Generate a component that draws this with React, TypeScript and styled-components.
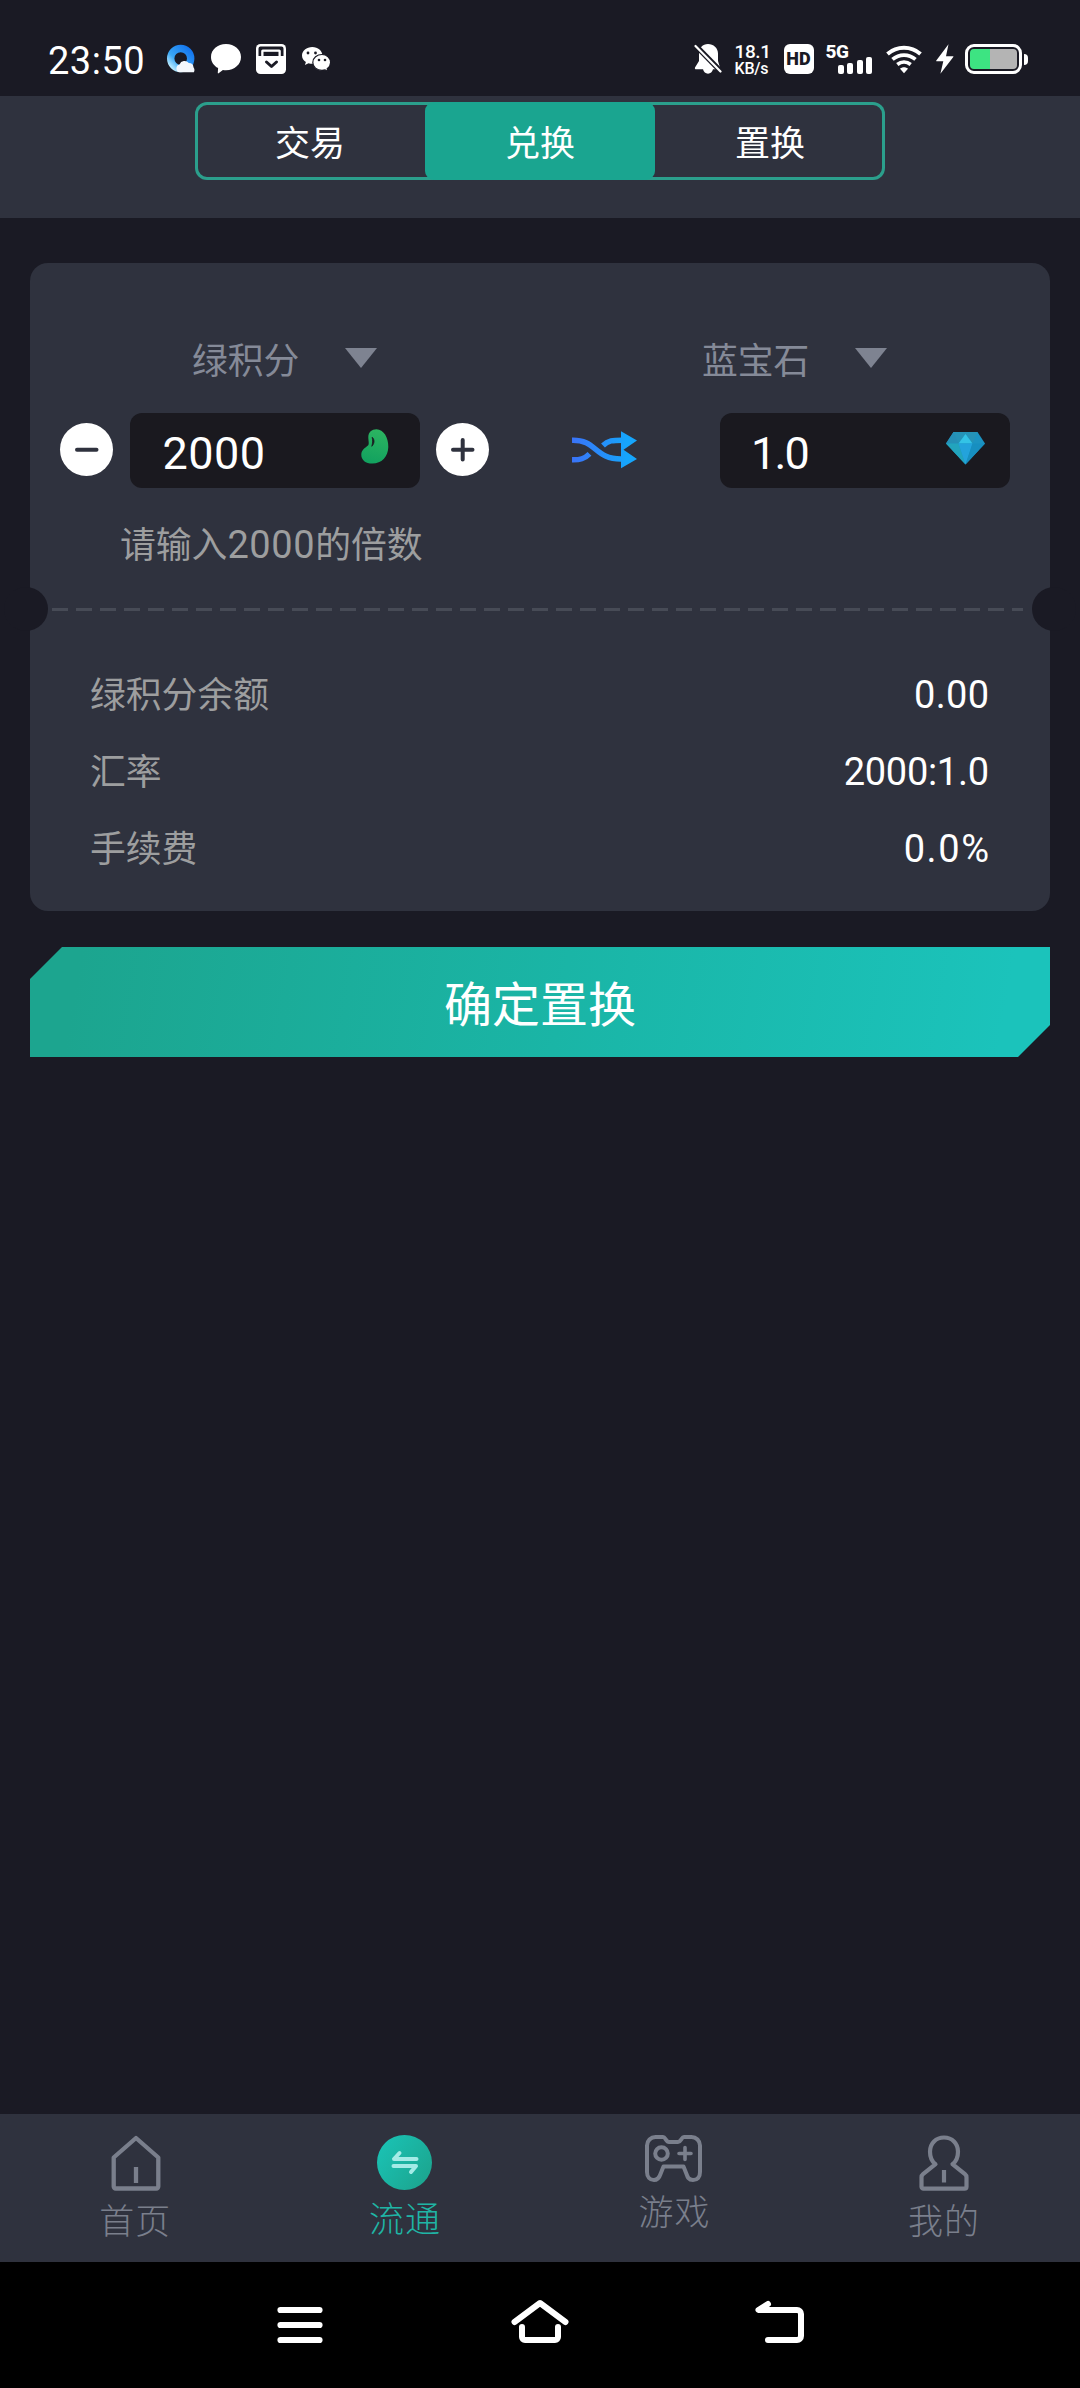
import React from "react";
import styled, { createGlobalStyle } from "styled-components";

const c = {
  page: "#1a1a24",
  panel: "#2f323e",
  field: "#1a191f",
  teal: "#1aa590",
  muted: "#858a98",
  grey: "#9d9e9f",
};

const GlobalStyle = createGlobalStyle`
  * { box-sizing: border-box; }
  body {
    margin: 0;
    background: ${c.page};
    font-family: Roboto, "Noto Sans CJK SC", sans-serif;
    font-weight: 400;
    color: #fff;
  }
  svg { display: block; flex: none; }
`;

const Screen = styled.div`
  width: 1080px;
  height: 2388px;
  display: flex;
  flex-direction: column;
  background: ${c.page};
  overflow: hidden;
`;

/* ---------- status bar ---------- */

const StatusBar = styled.div`
  height: 96px;
  padding: 44px 52px 0 48px;
  display: flex;
  justify-content: space-between;
`;

const StatusGroup = styled.div`
  display: flex;
  align-items: flex-start;
`;

const Clock = styled.div`
  width: 119px;
  font-size: 38px;
  line-height: 35px;
  letter-spacing: 0.5px;
  white-space: nowrap;
`;

const Slot = styled.div<{ $w: number; $gap?: number }>`
  width: ${(p) => p.$w}px;
  margin-right: ${(p) => p.$gap ?? 0}px;
  flex: none;
`;

const NetSpeed = styled(Slot)`
  display: flex;
  flex-direction: column;
  white-space: nowrap;
  font-weight: 500;
`;

const SpeedValue = styled.span`
  font-size: 19px;
  line-height: 15px;
  letter-spacing: -0.4px;
`;

const SpeedUnit = styled.span`
  margin-top: 2px;
  font-size: 16px;
  line-height: 15px;
  letter-spacing: -0.2px;
`;

const HdBadge = styled(Slot)`
  height: 30px;
  border-radius: 6px;
  background: #fff;
  color: ${c.page};
  font-size: 18px;
  font-weight: 900;
  line-height: 30px;
  text-align: center;
`;

const Signal = styled(Slot)`
  height: 30px;
  display: flex;
  flex-direction: column;
`;

const SignalLabel = styled.span`
  height: 14px;
  font-size: 19px;
  font-weight: 800;
  line-height: 15px;
  letter-spacing: -0.5px;
`;

const SignalBars = styled.div`
  margin-top: -1px;
  height: 17px;
  padding-left: 12px;
  display: flex;
  align-items: flex-end;
  gap: 3.6px;
`;

const SignalBar = styled.span<{ $h: number }>`
  width: 6px;
  height: ${(p) => p.$h}px;
  border-radius: 2px;
  background: #fff;
`;

const Battery = styled.div`
  display: flex;
  align-items: center;
  gap: 2.5px;
`;

const BatteryBody = styled.div`
  width: 57px;
  height: 30px;
  padding: 2px;
  border: 3px solid #fff;
  border-radius: 9px;
`;

const BatteryCharge = styled.div`
  height: 100%;
  border-radius: 4px;
  background: linear-gradient(90deg, #3de482 42%, #b4b4b4 42%);
`;

const BatteryTip = styled.div`
  width: 4px;
  height: 11px;
  border-radius: 0 5px 5px 0;
  background: #fff;
`;

/* ---------- header tabs ---------- */

const Header = styled.header`
  height: 122px;
  padding-top: 6px;
  background: ${c.panel};
  display: flex;
  justify-content: center;
  align-items: flex-start;
`;

const Segments = styled.div`
  width: 690px;
  height: 78px;
  display: grid;
  grid-template-columns: repeat(3, 1fr);
  border-radius: 12px;
  box-shadow: inset 0 0 0 3px #2b9f8c;
`;

const Segment = styled.button<{ $active?: boolean }>`
  height: 78px;
  margin: 0;
  padding: 4px 0 0;
  border: 0;
  border-radius: 9px;
  background: ${(p) => (p.$active ? c.teal : "transparent")};
  color: #fff;
  font: inherit;
  font-size: 35px;
  line-height: 77px;
  display: flex;
  align-items: flex-start;
  justify-content: center;
`;

/* ---------- exchange card ---------- */

const Card = styled.section`
  height: 648px;
  margin: 45px 30px 0;
  padding-top: 79px;
  border-radius: 18px;
  background: ${c.panel};
`;

const Selects = styled.div`
  padding-left: 162px;
  display: flex;
  gap: 325px;
`;

const Select = styled.div`
  display: flex;
  justify-content: space-between;
  width: 185px;
  color: ${c.muted};
  font-size: 35.8px;
  line-height: 40px;
`;

const Caret = styled.span`
  width: 32px;
  height: 20px;
  margin-top: 6px;
  background: #7e8391;
  clip-path: polygon(0 0, 100% 0, 50% 100%);
`;

const Amounts = styled.div`
  height: 75px;
  margin-top: 31px;
  padding: 0 40px 0 30px;
  display: flex;
  align-items: flex-start;
  justify-content: space-between;
`;

const Stepper = styled.div`
  display: flex;
  align-items: flex-start;
  gap: 16.5px;
`;

const RoundButton = styled.button`
  width: 53px;
  height: 53px;
  margin: 10px 0 0;
  padding: 0;
  border: 0;
  border-radius: 50%;
  background: #fff;
`;

const Field = styled.div<{ $left: number; $right: number }>`
  width: 290px;
  height: 75px;
  padding: 0 ${(p) => p.$right}px 0 ${(p) => p.$left}px;
  display: flex;
  justify-content: space-between;
  align-items: flex-start;
  border-radius: 12px;
  background: ${c.field};
`;

const Amount = styled.span<{ $track: number }>`
  font-size: 45px;
  line-height: 81px;
  letter-spacing: ${(p) => p.$track}px;
`;

const IconBox = styled.div<{ $top: number }>`
  margin-top: ${(p) => p.$top}px;
`;

const Hint = styled.p`
  margin: 37px 0 0;
  padding-left: 90px;
  color: ${c.grey};
  font-size: 35.8px;
  line-height: 40px;
`;

const Digits = styled.span`
  font-size: 38px;
  letter-spacing: 0.6px;
`;

const Perforation = styled.div`
  height: 44px;
  margin: 21px -26px 0;
  display: flex;
  align-items: center;
`;

const Notch = styled.span`
  width: 44px;
  height: 44px;
  border-radius: 50%;
  background: ${c.page};
`;

const Dashes = styled.span`
  flex: 1;
  height: 3px;
  margin: 0 9px 0 4px;
  background: repeating-linear-gradient(90deg, #474b56 0 16px, transparent 16px 24px);
`;

const Details = styled.dl`
  margin: 26px 0 0;
  padding: 0 61px 0 60px;
`;

const DetailRow = styled.div`
  height: 77px;
  display: flex;
  justify-content: space-between;
  align-items: center;
  line-height: 44px;
`;

const DetailLabel = styled.dt`
  color: ${c.grey};
  font-size: 35.8px;
`;

const DetailValue = styled.dd<{ $track: number }>`
  margin: 0 ${(p) => -p.$track}px 2px 0;
  font-size: 38px;
  letter-spacing: ${(p) => p.$track}px;
`;

const Confirm = styled.button`
  height: 110px;
  margin: 36px 30px 0;
  padding: 7px 0 0;
  border: 0;
  background: linear-gradient(100deg, #1ca58f 5%, #1ab5a6 52%, #1bc3bb 95%);
  clip-path: polygon(32px 0, 100% 0, 100% calc(100% - 32px), calc(100% - 32px) 100%, 0 100%, 0 32px);
  color: #fff;
  font: inherit;
  font-size: 48px;
  line-height: 103px;
`;

/* ---------- bottom bars ---------- */

const TabBar = styled.nav`
  height: 148px;
  margin-top: auto;
  padding: 21px 0 0;
  display: grid;
  grid-template-columns: repeat(4, 269.6px);
  background: ${c.panel};
`;

const Tab = styled.div<{ $active?: boolean }>`
  display: flex;
  flex-direction: column;
  align-items: center;
  color: ${(p) => (p.$active ? "#1fb5a5" : "#7a7f8c")};
`;

const TabLabel = styled.span<{ $gap: number }>`
  margin-top: ${(p) => p.$gap}px;
  padding-left: 1px;
  font-size: 35px;
  font-weight: 300;
  line-height: 40px;
  letter-spacing: 1px;
`;

const SystemBar = styled.div`
  height: 126px;
  padding: 36px 273px 0;
  display: flex;
  justify-content: space-between;
  background: #000;
`;

/* ---------- icons ---------- */

const BrowserIcon = () => (
  <svg width="28" height="29" viewBox="0 0 28 29">
    <defs>
      <linearGradient id="qb" x1="0" y1="1" x2="1" y2="0">
        <stop offset="0" stopColor="#c6f1ff" />
        <stop offset="0.35" stopColor="#3aa7f5" />
        <stop offset="1" stopColor="#1273ee" />
      </linearGradient>
    </defs>
    <circle cx="13.7" cy="14.5" r="10" fill="none" stroke="url(#qb)" strokeWidth="7.4" />
    <path d="M12.500 28.300a4 4 0 0 1 0-7.800a5.400 5.400 0 0 1 9.300-1.500a4.700 4.700 0 0 1 4.700 4.200a5 5 0 0 1 .4 5.100z" fill="#f3f7fc" />
  </svg>
);

const BubbleIcon = () => (
  <svg width="30" height="30" viewBox="0 0 30 30" fill="#fff">
    <path d="M15 0C23.500 0 30 5.600 30 13s-6.500 13.200-15 13.200c-1.100 0-2.100-.1-3.100-.3L7.600 29.300c-.5.300-.9 0-.8-.5l.3-4.700C2.700 21.800 0 17.800 0 13 0 5.600 6.500 0 15 0z" />
  </svg>
);

const InboxIcon = () => (
  <svg width="30" height="30" viewBox="0 0 30 30">
    <rect width="30" height="30" rx="4.500" fill="#fff" />
    <path d="M2.500 12V4.500a2 2 0 0 1 2-2h21a2 2 0 0 1 2 2V12h-2.700V7a1.500 1.500 0 0 0-1.500-1.500H6.700A1.500 1.500 0 0 0 5.200 7v5z" fill={c.page} />
    <path d="M7.500 12V7.800h15V12z" fill={c.page} />
    <path d="M10.500 18l5 4.500 5-4.500" fill="none" stroke={c.page} strokeWidth="3" strokeLinecap="round" strokeLinejoin="round" />
  </svg>
);

const WechatIcon = () => (
  <svg width="29" height="30" viewBox="0 0 29 30">
    <path d="M10.300 3C4.600 3 0 6.700 0 11.500c0 2.800 1.500 5 3.900 6.500l-1 3 3.600-1.800c1.200.4 2.500.6 3.900.6 5.700 0 10-3.700 10-8.300S16 3 10.300 3z" fill="#fff" />
    <path d="M20 10.500c-5 0-9.200 3.300-9.200 7.900s4.200 8 9.200 8c1 0 2.100-.2 3.100-.5l2.900 1.600-.8-2.700c2-1.500 3.400-3.600 3.400-6.200 0-4.700-3.900-8.100-8.600-8.100z" fill="#fff" stroke={c.page} strokeWidth="1.200" />
    <g fill={c.page}>
      <circle cx="6" cy="9" r="1.400" />
      <circle cx="13.500" cy="9" r="1.400" />
      <circle cx="17" cy="16" r="1.300" />
      <circle cx="23" cy="16" r="1.300" />
    </g>
  </svg>
);

const MutedBellIcon = () => (
  <svg width="28" height="30" viewBox="0 0 28 30">
    <path d="M14 0C8.600 0 5 4 5 9.500V17L1 23.500c-.4 1 .1 1.800 1 1.800h7c.6 2.700 2.600 4.400 5 4.400s4.400-1.700 5-4.400h6c.9 0 1.400-.8 1-1.800L24 17V9.500C24 4 19.400 0 14 0z" fill="#fff" />
    <path d="M-1 -1L28 28.500" stroke={c.page} strokeWidth="5.400" />
    <path d="M1.500 2L26.500 27.500" stroke="#fff" strokeWidth="2.200" strokeLinecap="round" />
  </svg>
);

const WifiIcon = () => (
  <svg width="36" height="30" viewBox="0 0 36 30" fill="none" stroke="#fff">
    <path d="M1.500 10C11 1.800 25 1.800 34.500 10" strokeWidth="4" />
    <path d="M6.500 15.400c6.700-5.700 16.300-5.700 23 0" strokeWidth="3.800" />
    <path d="M11.300 20.500c4-3.200 9.400-3.200 13.400 0" strokeWidth="3.600" />
    <path d="M18 29.300l-4-4.500c2.400-2 5.600-2 8 0z" fill="#fff" stroke="none" />
  </svg>
);

const BoltIcon = () => (
  <svg width="18" height="30" viewBox="0 0 18 30" fill="#fff">
    <path d="M12.500.3L.3 16.500c-.3.500-.1.800.4.800h6.600L4.400 29.700 17.300 13.100c.3-.5.100-.8-.4-.8h-6.900z" />
  </svg>
);

const Minus = () => (
  <svg width="53" height="53" viewBox="0 0 53 53" stroke={c.panel} strokeWidth="4" strokeLinecap="round">
    <path d="M17 26.800h19.500" />
  </svg>
);

const Plus = () => (
  <svg width="53" height="53" viewBox="0 0 53 53" stroke={c.panel} strokeWidth="4" strokeLinecap="round">
    <path d="M17 26.800h19.500M26.700 17v19.500" />
  </svg>
);

const BeanIcon = () => (
  <svg width="28" height="35" viewBox="0 0 28 35">
    <defs>
      <linearGradient id="bean" x1="0.6" y1="0" x2="0.4" y2="1">
        <stop offset="0" stopColor="#2cb561" />
        <stop offset="1" stopColor="#12a15f" />
      </linearGradient>
    </defs>
    <path d="M15.500.2C22.500.2 27.500 8.500 27.300 18 27.100 28 20.500 34.500 11.500 34.500 4.500 34.500.3 31 .3 25.700c0-5 4.200-7 6.700-9.200C8.500 15 7.300 11.500 7.300 8.200 7.300 3 10.800.2 15.500.2z" fill="url(#bean)" />
    <path d="M11.200 8.300c2.400 2 2.600 6-.4 9 1-3.500 1-5.500.4-9z" fill={c.field} stroke={c.field} strokeWidth="0.800" strokeLinejoin="round" />
  </svg>
);

const SwapIcon = () => (
  <svg width="65" height="38" viewBox="0 0 65 38">
    <defs>
      <linearGradient id="swap" gradientUnits="userSpaceOnUse" x1="0" y1="0" x2="55" y2="0">
        <stop offset="0" stopColor="#3a73f8" />
        <stop offset="1" stopColor="#16a5fb" />
      </linearGradient>
    </defs>
    <g fill="none" stroke="url(#swap)" strokeWidth="5.400">
      <path d="M0 9.200C25 8.600 22 28.500 50 28" />
      <path d="M0 28.800c8 .2 12.500-1 17.500-6" />
      <path d="M31 14.500c5-5 10-5.300 19-5.300" />
    </g>
    <path d="M49 .3L65 9.500 51.500 18.800 65 28 49 37.300z" fill="url(#swap)" />
  </svg>
);

const GemIcon = () => (
  <svg width="39" height="33" viewBox="0 0 39 33">
    <path d="M7.500 0h24L39 11.500 19.500 32.500 0 11.500z" fill="#1c93c1" />
    <path d="M7.500 0h12L12.500 11.500 0 11.500z" fill="#258fb6" />
    <path d="M0 11.500h12.500l7 21z" fill="#22a4bd" />
    <path d="M7.500 0L12.500 11.500 19.500 2 26.500 11.500 31.500 0z" fill="#2593b7" />
    <path d="M19.500 2l7 9.500h-14z" fill="#33c3e6" />
    <path d="M12.500 11.500h14l-7 21z" fill="#23a3dc" />
    <path d="M26.500 11.500H39l-19.500 21z" fill="#178fc0" />
  </svg>
);

const HomeIcon = () => (
  <svg width="52" height="56" viewBox="0 0 52 56" fill="none" stroke="currentColor" strokeWidth="4.300" strokeLinejoin="round">
    <path d="M27 3.500L49.300 23v29a2 2 0 0 1-2 2H6.700a2 2 0 0 1-2-2V23z" transform="translate(0,-.5)" />
    <path d="M27 32v16" />
  </svg>
);

const FlowIcon = () => (
  <svg width="55" height="56" viewBox="0 0 55 56">
    <defs>
      <linearGradient id="flow" x1="0" y1="0.2" x2="1" y2="0.9">
        <stop offset="0" stopColor="#1ac2b4" />
        <stop offset="1" stopColor="#1ca38c" />
      </linearGradient>
    </defs>
    <circle cx="27.500" cy="27.500" r="27.500" fill="url(#flow)" />
    <g fill="none" stroke="#a3ebe6" strokeWidth="4" strokeLinecap="round" strokeLinejoin="round">
      <path d="M39.500 24H17l5.500-6" />
      <path d="M16.500 31h22.500l-5 6" />
    </g>
  </svg>
);

const GamepadIcon = () => (
  <svg width="57" height="48" viewBox="0 0 57 48" fill="none" stroke="currentColor" strokeWidth="4" strokeLinejoin="round" strokeLinecap="round">
    <path d="M10.500 2h7.500c2.500 0 3 5 6 5h9c3 0 3.500-5 6-5h7.500A8.500 8.500 0 0 1 55 10.500V37c0 5-2.500 8-7 8s-5.500-3-6.500-6L38.500 31.500H18.500L15.500 39c-1 3-2.500 6-6.500 6s-7-3-7-8V10.500A8.500 8.500 0 0 1 10.500 2z" />
    <circle cx="16.500" cy="18.500" r="6.300" />
    <path d="M34 18.500h12M40 12.500v12" strokeWidth="3.600" />
  </svg>
);

const UserIcon = () => (
  <svg width="50" height="56" viewBox="0 0 50 56" fill="none" stroke="currentColor" strokeWidth="4.200" strokeLinejoin="round">
    <path d="M16.500 29.500C12.500 26.500 11 21.500 11 17 11 8.500 17 2.800 25 2.800S39 8.500 39 17c0 4.500-1.500 9.500-5.500 12.500L46 39.500c1 .8 1.500 1.500 1.500 3V52a2 2 0 0 1-2 2H4.500a2 2 0 0 1-2-2v-9.500c0-1.500.5-2.200 1.500-3z" transform="translate(0,-.3)" />
    <path d="M25 35v12.500" />
  </svg>
);

const RecentsIcon = () => (
  <svg width="54" height="50" viewBox="0 0 54 50" stroke="#fff" strokeWidth="6.200" strokeLinecap="round">
    <path d="M7.500 12h39M7.500 27h39M7.500 42h39" />
  </svg>
);

const SystemHomeIcon = () => (
  <svg width="60" height="50" viewBox="0 0 60 50" fill="none" stroke="#fff" strokeWidth="6" strokeLinecap="round" strokeLinejoin="round">
    <path d="M4.500 24L30 5l25.500 19" />
    <path d="M12 29v10a3 3 0 0 0 3 3h30a3 3 0 0 0 3-3V29" />
  </svg>
);

const BackIcon = () => (
  <svg width="54" height="50" viewBox="0 0 54 50" fill="none" stroke="#fff" strokeWidth="6" strokeLinecap="round" strokeLinejoin="round">
    <path d="M15 6L5.500 12H44a4 4 0 0 1 4 4v22a4 4 0 0 1-4 4H15" />
  </svg>
);

const details = [
  { label: "绿积分余额", value: "0.00", track: 0.3 },
  { label: "汇率", value: "2000:1.0", track: -0.3 },
  { label: "手续费", value: "0.0%", track: 1.6 },
];

const tabs = [
  { label: "首页", icon: <HomeIcon />, gap: 12 },
  { label: "流通", icon: <FlowIcon />, gap: 10, active: true },
  { label: "游戏", icon: <GamepadIcon />, gap: 11 },
  { label: "我的", icon: <UserIcon />, gap: 12 },
];

export default function App() {
  return (
    <>
      <GlobalStyle />
      <Screen>
        <StatusBar>
          <StatusGroup>
            <Clock>23:50</Clock>
            <Slot $w={28} $gap={16}><BrowserIcon /></Slot>
            <Slot $w={30} $gap={15}><BubbleIcon /></Slot>
            <Slot $w={30} $gap={16}><InboxIcon /></Slot>
            <Slot $w={29}><WechatIcon /></Slot>
          </StatusGroup>
          <StatusGroup>
            <Slot $w={28} $gap={13}><MutedBellIcon /></Slot>
            <NetSpeed $w={36} $gap={13}>
              <SpeedValue>18.1</SpeedValue>
              <SpeedUnit>KB/s</SpeedUnit>
            </NetSpeed>
            <HdBadge $w={30} $gap={12}>HD</HdBadge>
            <Signal $w={48} $gap={12}>
              <SignalLabel>5G</SignalLabel>
              <SignalBars>
                {[9, 11, 14, 17].map((h) => (
                  <SignalBar key={h} $h={h} />
                ))}
              </SignalBars>
            </Signal>
            <Slot $w={36} $gap={14}><WifiIcon /></Slot>
            <Slot $w={18} $gap={11}><BoltIcon /></Slot>
            <Battery>
              <BatteryBody><BatteryCharge /></BatteryBody>
              <BatteryTip />
            </Battery>
          </StatusGroup>
        </StatusBar>

        <Header>
          <Segments>
            <Segment>交易</Segment>
            <Segment $active>兑换</Segment>
            <Segment>置换</Segment>
          </Segments>
        </Header>

        <Card>
          <Selects>
            <Select>绿积分<Caret /></Select>
            <Select>蓝宝石<Caret /></Select>
          </Selects>
          <Amounts>
            <Stepper>
              <RoundButton aria-label="减少"><Minus /></RoundButton>
              <Field $left={33} $right={31}>
                <Amount $track={0.5}>2000</Amount>
                <IconBox $top={16}><BeanIcon /></IconBox>
              </Field>
              <RoundButton aria-label="增加"><Plus /></RoundButton>
            </Stepper>
            <IconBox $top={18}><SwapIcon /></IconBox>
            <Field $left={31} $right={25}>
              <Amount $track={-1.8}>1.0</Amount>
              <IconBox $top={19}><GemIcon /></IconBox>
            </Field>
          </Amounts>
          <Hint>请输入<Digits>2000</Digits>的倍数</Hint>
          <Perforation>
            <Notch />
            <Dashes />
            <Notch />
          </Perforation>
          <Details>
            {details.map((d) => (
              <DetailRow key={d.label}>
                <DetailLabel>{d.label}</DetailLabel>
                <DetailValue $track={d.track}>{d.value}</DetailValue>
              </DetailRow>
            ))}
          </Details>
        </Card>

        <Confirm>确定置换</Confirm>

        <TabBar>
          {tabs.map((t) => (
            <Tab key={t.label} $active={t.active}>
              {t.icon}
              <TabLabel $gap={t.gap}>{t.label}</TabLabel>
            </Tab>
          ))}
        </TabBar>

        <SystemBar>
          <RecentsIcon />
          <SystemHomeIcon />
          <BackIcon />
        </SystemBar>
      </Screen>
    </>
  );
}
